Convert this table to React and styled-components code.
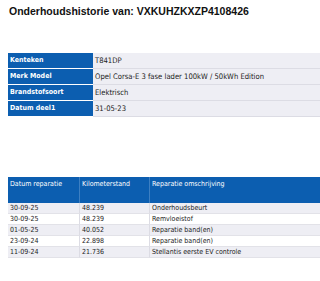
import React from "react";
import styled, { createGlobalStyle } from "styled-components";

const Global = createGlobalStyle`
  html, body { margin: 0; padding: 0; background: #fff; overflow: hidden; }
  body { font-family: "Liberation Sans", Arial, sans-serif; }
`;

const Page = styled.div`
  box-sizing: border-box;
  width: 320px;
  padding: 4px 0 0 8px;
  display: flex;
  flex-direction: column;
`;

const Title = styled.h1`
  margin: 0 0 0 1px;
  font: bold 10.5px/14px "Liberation Sans", Arial, sans-serif;
  color: #111;
`;

const InfoTable = styled.div`
  margin-top: 35px;
  display: grid;
  grid-template-columns: 85px 1fr;
`;

const Label = styled.div`
  height: 15px;
  border-bottom: 1px solid #fff;
  background: #0c5eb0;
  color: #fff;
  font: bold 7px/15px "DejaVu Sans Condensed", "DejaVu Sans", sans-serif;
  padding-left: 2px;
`;

const Value = styled.div`
  height: 15px;
  border-bottom: 1px solid #dcdce4;
  background: #eeeef4;
  color: #222;
  font: 7.6px/15px "DejaVu Sans Condensed", "DejaVu Sans", sans-serif;
  padding-left: 2px;
`;

const History = styled.div`
  margin-top: 60px;
  display: grid;
  grid-template-columns: 71px 70px 1fr;
`;

const Head = styled.div`
  height: 24px;
  padding: 2px 2px 0;
  background: #0c5eb0;
  border-left: ${(p) => (p.$first ? "none" : "1px solid #3d7fc2")};
  color: #fff;
  font: 7px/10px "DejaVu Sans Condensed", "DejaVu Sans", sans-serif;
`;

const Cell = styled.div`
  height: 10px;
  padding-left: 2px;
  background: ${(p) => (p.$odd ? "#fff" : "#eeeef4")};
  border-bottom: 1px solid #e2e2e8;
  border-left: ${(p) => (p.$first ? "none" : "1px solid #dcdce4")};
  color: #222;
  font: 7px/10px "DejaVu Sans Condensed", "DejaVu Sans", sans-serif;
`;

const info = [
  ["Kenteken", "T841DP"],
  ["Merk Model", "Opel Corsa-E 3 fase lader 100kW / 50kWh Edition"],
  ["Brandstofsoort", "Elektrisch"],
  ["Datum deel1", "31-05-23"],
];

const rows = [
  ["30-09-25", "48.239", "Onderhoudsbeurt"],
  ["30-09-25", "48.239", "Remvloeistof"],
  ["01-05-25", "40.052", "Reparatie band(en)"],
  ["23-09-24", "22.898", "Reparatie band(en)"],
  ["11-09-24", "21.736", "Stellantis eerste EV controle"],
];

export default function App() {
  return (
    <>
      <Global />
      <Page>
        <Title>Onderhoudshistorie van: VXKUHZKXZP4108426</Title>
        <InfoTable>
          {info.map(([l, v]) => (
            <React.Fragment key={l}>
              <Label>{l}</Label>
              <Value>{v}</Value>
            </React.Fragment>
          ))}
        </InfoTable>
        <History>
          <Head $first>Datum reparatie</Head>
          <Head>Kilometerstand</Head>
          <Head>Reparatie omschrijving</Head>
          {rows.map((r, i) =>
            r.map((c, j) => (
              <Cell key={i + "-" + j} $first={j === 0} $odd={i % 2 === 1}>
                {c}
              </Cell>
            ))
          )}
        </History>
      </Page>
    </>
  );
}
